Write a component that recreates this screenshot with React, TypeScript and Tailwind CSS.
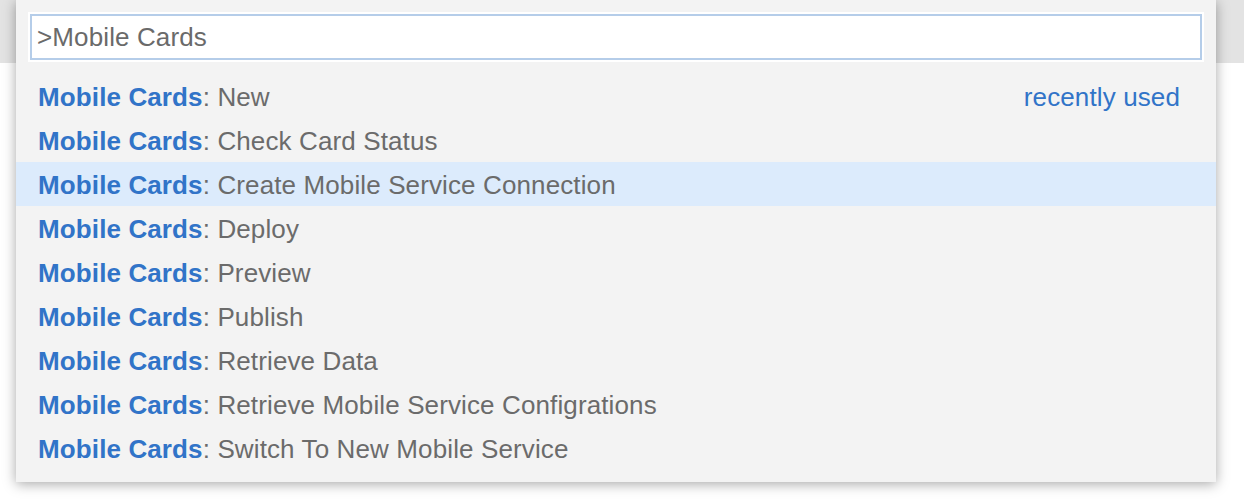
import React from "react";

const items = [
  "New",
  "Check Card Status",
  "Create Mobile Service Connection",
  "Deploy",
  "Preview",
  "Publish",
  "Retrieve Data",
  "Retrieve Mobile Service Configrations",
  "Switch To New Mobile Service",
];

export default function App() {
  return (
    <div
      className="relative w-[1244px] h-[502px] bg-white overflow-hidden tracking-[0.12px]"
      style={{ fontFamily: '"Liberation Sans", Arial, sans-serif' }}
    >
      <div className="h-[63px] bg-[#e3e3e3]" />
      <div className="absolute left-[16px] top-0 w-[1200px] h-[482px] bg-[#f3f3f3] shadow-[0_2px_12px_rgba(0,0,0,0.35)]">
        <div className="pt-[12px] px-[12px]">
          <div className="bg-white p-[2px]">
            <div className="h-[46px] border-2 border-[#b5cde9] bg-white flex items-center pl-[5px] pt-[1px] text-[26px] text-[#6a6a6a]">
              &gt;Mobile Cards
            </div>
          </div>
        </div>
        <div className="mt-[12px]">
          {items.map((it, i) => (
            <div
              key={it}
              className={
                "h-[44px] flex items-center justify-between pl-[22px] pr-[36px] pt-[2px] text-[26px] " +
                (i === 2 ? "bg-[#dcebfc]" : "")
              }
            >
              <div className="whitespace-nowrap">
                <span className="font-bold text-[#3174c8]">Mobile Cards</span>
                <span className="text-[#6b6b6b]">: {it}</span>
              </div>
              {i === 0 && <span className="text-[#3174c8]">recently used</span>}
            </div>
          ))}
        </div>
      </div>
    </div>
  );
}
